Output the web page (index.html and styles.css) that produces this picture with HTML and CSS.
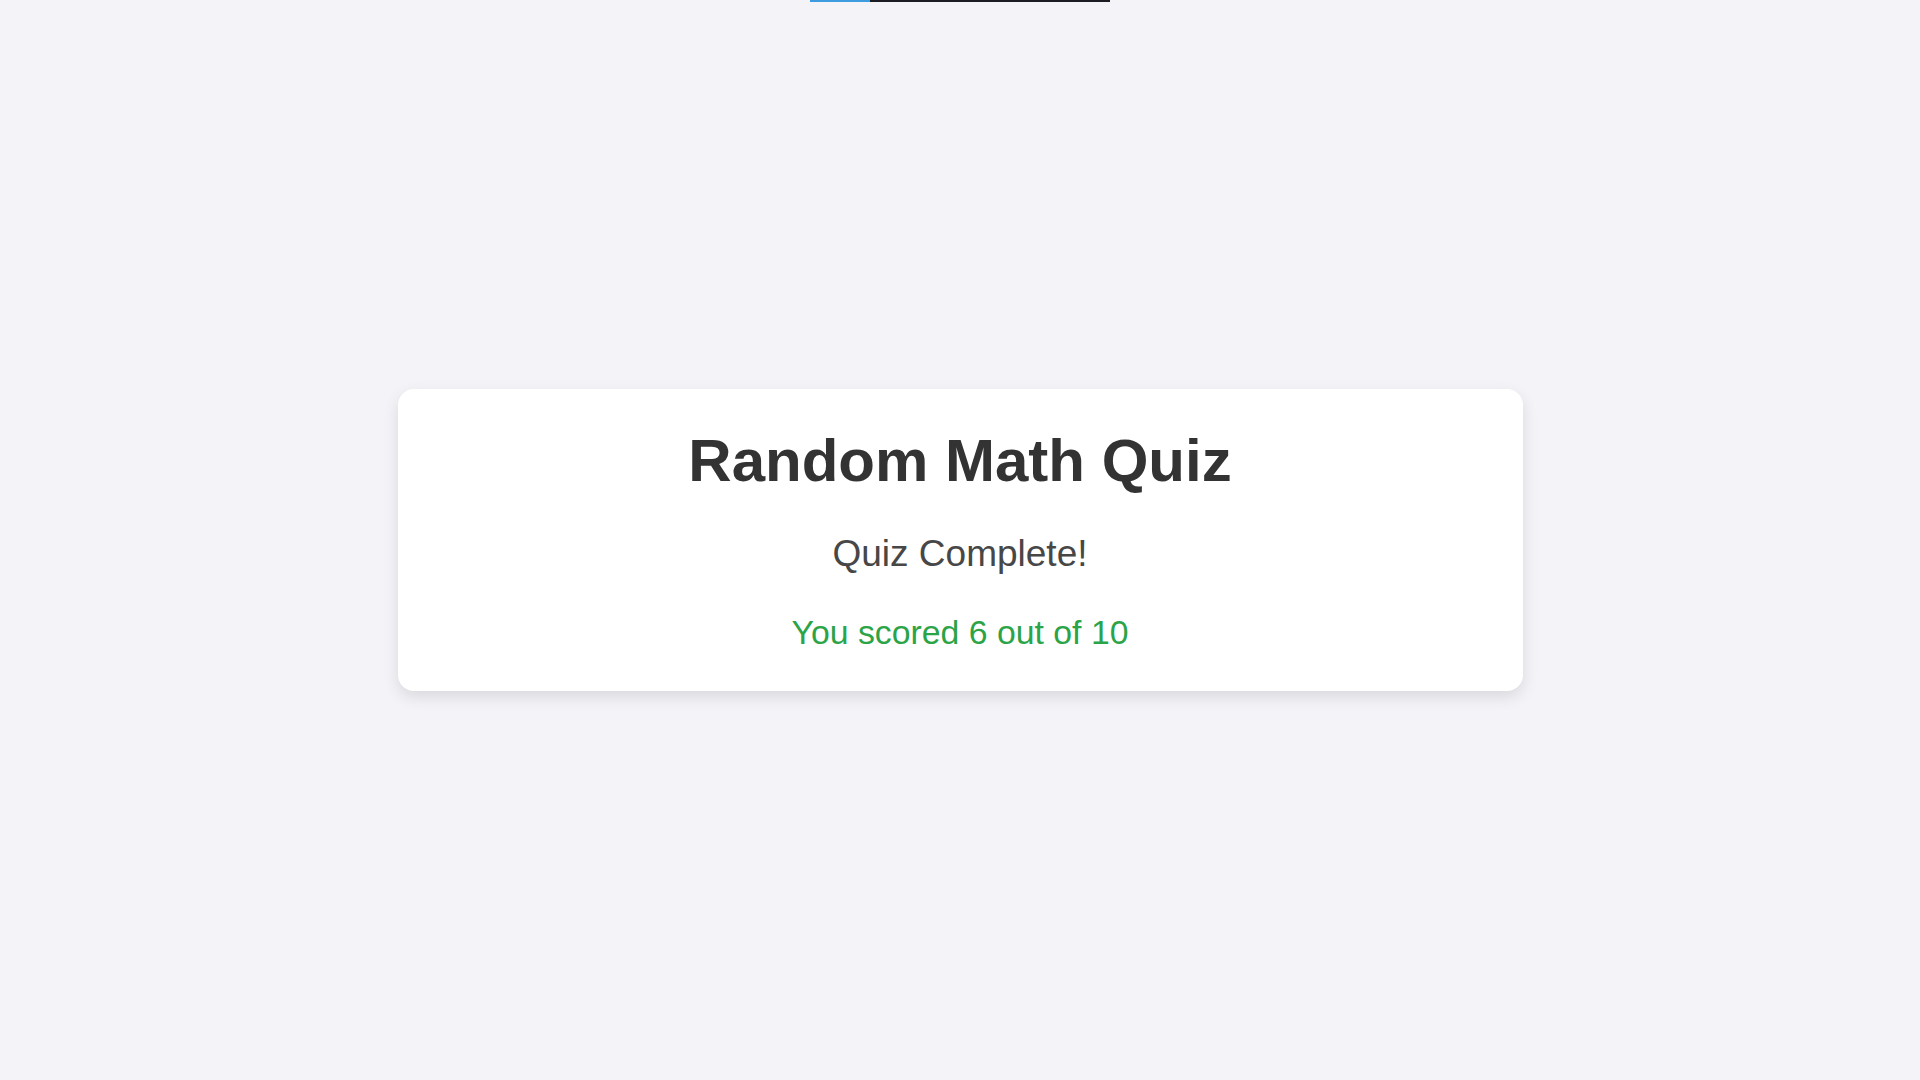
FILE: index.html
```
<!DOCTYPE html>
<html lang="en">
<head>
  <meta charset="UTF-8">
  <meta name="viewport" content="width=device-width, initial-scale=1.0">
  <title>Random Math Quiz</title>
  <link rel="stylesheet" href="styles.css">
</head>
<body>
  <div class="progress">
    <div class="progress-fill"></div>
  </div>

  <div class="main">
    <div class="container">
      <h1>Random Math Quiz</h1>
      <div class="result-title">Quiz Complete!</div>
      <div class="score">You scored 6 out of 10</div>
    </div>
  </div>
</body>
</html>
```

FILE: styles.css
```
body {
  margin: 0;
  height: 100vh;
  font-family: 'Liberation Sans', Arial, sans-serif;
  background-color: #f4f4f8;
  display: flex;
  flex-direction: column;
  align-items: center;
}
.progress {
  flex: none;
  width: 300px;
  height: 2px;
  background-color: #1c1c24;
  display: flex;
}
.progress-fill {
  width: 20%;
  background-color: #3d9be0;
}
.main {
  flex: 1;
  width: 100%;
  margin-top: -2px;
  display: flex;
  align-items: center;
  justify-content: center;
}
.container {
  width: 1125px;
  box-sizing: border-box;
  background: #fff;
  padding: 37px 45px 39px;
  border-radius: 16px;
  box-shadow: 0 6px 16px rgba(0,0,0,0.11);
  text-align: center;
}
h1 {
  margin: 0 0 38px;
  font-size: 60px;
  font-weight: bold;
  color: #333;
}
.result-title {
  margin-bottom: 38px;
  font-size: 37px;
  color: #474747;
}
.score {
  font-size: 33.8px;
  color: #2ba448;
}
```
